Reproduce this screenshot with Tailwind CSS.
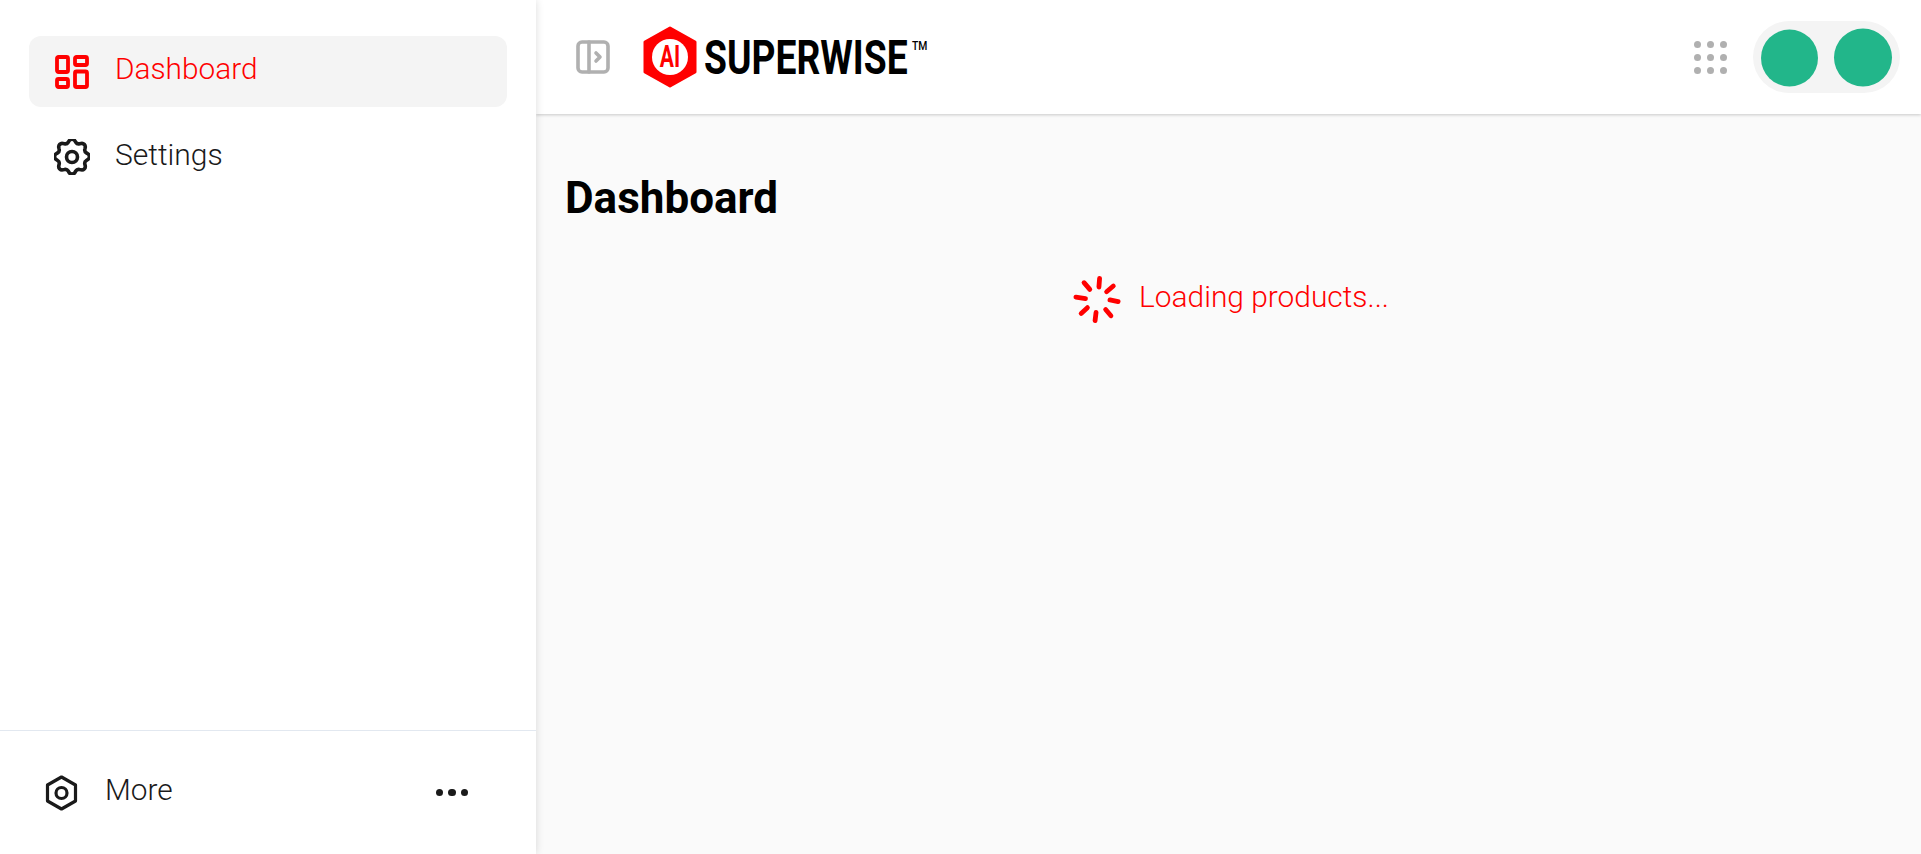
<!DOCTYPE html>
<html><head><meta charset="utf-8"><title>Dashboard</title>
<script src="https://cdn.jsdelivr.net/npm/@tailwindcss/browser@4"></script></head>
<body class="font-['Roboto',sans-serif]">
<div class="flex h-[854px] w-[1921px] overflow-hidden bg-[#fafafa]">
  <aside class="z-20 flex h-full w-[536px] shrink-0 flex-col bg-white shadow-[0_0_8px_rgba(0,0,0,0.14)]">
    <nav class="flex flex-1 flex-col gap-[14px] px-[29px] pt-[36px]">
      <a class="flex h-[71px] items-center gap-[25px] rounded-[12px] bg-[#f4f4f4] pl-[25px] text-[29.8px] font-light text-[#ff0000]">
        <svg class="h-[36px] w-[36px]" viewBox="0 0 36 36" fill="none" stroke="#ff0000" stroke-width="3.8" stroke-linejoin="round"><rect x="3" y="3" width="11" height="15" rx="1.5"/><rect x="21" y="3" width="12" height="8" rx="1.5"/><rect x="21" y="17.500" width="12" height="15.500" rx="1.5"/><rect x="3" y="25" width="11" height="8" rx="1.5"/></svg>
        <span class="pb-[5px]">Dashboard</span>
      </a>
      <a class="flex h-[71px] items-center gap-[25px] pl-[25px] text-[30px] font-light text-[#1a1a1a]">
        <svg class="h-[36px] w-[36px]" viewBox="1.5 1.5 21 21" fill="none" stroke="#1a1a1a" stroke-width="2.1" stroke-linejoin="round"><circle cx="12" cy="12" r="3.2"/><path d="M10.3 2.6a2 2 0 0 1 3.4 0l.5.8a2 2 0 0 0 2.2.9l.9-.2a2 2 0 0 1 2.4 2.4l-.2.9a2 2 0 0 0 .9 2.2l.8.5a2 2 0 0 1 0 3.4l-.8.5a2 2 0 0 0-.9 2.2l.2.9a2 2 0 0 1-2.4 2.4l-.9-.2a2 2 0 0 0-2.2.9l-.5.8a2 2 0 0 1-3.4 0l-.5-.8a2 2 0 0 0-2.2-.9l-.9.2a2 2 0 0 1-2.4-2.4l.2-.9a2 2 0 0 0-.9-2.2l-.8-.5a2 2 0 0 1 0-3.4l.8-.5a2 2 0 0 0 .9-2.2l-.2-.9a2 2 0 0 1 2.4-2.4l.9.2a2 2 0 0 0 2.2-.9z"/></svg>
        <span class="pb-[4px]">Settings</span>
      </a>
    </nav>
    <div class="flex h-[124px] items-center justify-between border-t border-[#e2e8f0] pr-[68px] pl-[45px]">
      <div class="flex items-center gap-[27px] text-[29.8px] font-light text-[#1a1a1a]">
        <svg class="h-[36px] w-[33px]" viewBox="0 0 33 36" fill="none" stroke="#1a1a1a" stroke-width="3.2" stroke-linejoin="round"><path d="M16.500 2 30.500 10v16L16.500 34 2.500 26V10z"/><circle cx="16.500" cy="18" r="5.500"/></svg>
        <span class="pb-[4px]">More</span>
      </div>
      <div class="flex gap-[5px]"><span class="h-[7.500px] w-[7.500px] rounded-full bg-[#1a1a1a]"></span><span class="h-[7.500px] w-[7.500px] rounded-full bg-[#1a1a1a]"></span><span class="h-[7.500px] w-[7.500px] rounded-full bg-[#1a1a1a]"></span></div>
    </div>
  </aside>
  <div class="flex min-w-0 flex-1 flex-col">
    <header class="z-10 flex h-[114px] shrink-0 items-center bg-white pr-[21px] pl-[40px] shadow-[0_1px_3px_rgba(0,0,0,0.2)]">
      <svg class="h-[34px] w-[34px] shrink-0" viewBox="0 0 34 34" fill="none" stroke="#b0b0b0" stroke-width="3.600" stroke-linecap="round" stroke-linejoin="round"><rect x="2" y="2" width="30" height="30" rx="4"/><path d="M13 2v30"/><path d="m20 13 4 4-4 4"/></svg>
      <div class="ml-[33px] flex items-center">
        <div class="relative h-[62px] w-[54px] shrink-0">
          <svg class="absolute inset-0 h-full w-full" viewBox="0 0 54 62"><path d="M27 2 52 16v30L27 60 2 46V16z" fill="#ff0000" stroke="#ff0000" stroke-width="3" stroke-linejoin="round"/><circle cx="27" cy="31" r="18" fill="#fff"/></svg>
          <span class="absolute inset-0 flex scale-x-[.68] items-center justify-center text-[31px] font-bold text-[#ff0000]">AI</span>
        </div>
        <span class="ml-[7px] w-[200px] origin-left scale-x-[.76] text-[49px] leading-none font-bold whitespace-nowrap text-black">SUPERWISE</span>
        <span class="ml-[6px] -mt-[22px] scale-x-[.8] text-[13px] font-medium text-black">TM</span>
      </div>
      <div class="ml-auto flex items-center gap-[26px]">
        <div class="grid grid-cols-3 gap-[6px]">
          <span class="h-[7px] w-[7px] rounded-full bg-[#b0b0b0]"></span><span class="h-[7px] w-[7px] rounded-full bg-[#b0b0b0]"></span><span class="h-[7px] w-[7px] rounded-full bg-[#b0b0b0]"></span>
          <span class="h-[7px] w-[7px] rounded-full bg-[#b0b0b0]"></span><span class="h-[7px] w-[7px] rounded-full bg-[#b0b0b0]"></span><span class="h-[7px] w-[7px] rounded-full bg-[#b0b0b0]"></span>
          <span class="h-[7px] w-[7px] rounded-full bg-[#b0b0b0]"></span><span class="h-[7px] w-[7px] rounded-full bg-[#b0b0b0]"></span><span class="h-[7px] w-[7px] rounded-full bg-[#b0b0b0]"></span>
        </div>
        <div class="flex h-[72px] w-[147px] items-center justify-between rounded-full bg-[#f4f4f4] px-[8px]">
          <span class="h-[57px] w-[57px] translate-y-[0.5px] rounded-full bg-[#22b68a]"></span>
          <span class="h-[58px] w-[58px] translate-y-[0.5px] rounded-full bg-[#22b68a]"></span>
        </div>
      </div>
    </header>
    <main class="flex-1 px-[29px] pt-[56px]">
      <h1 class="text-[44px] leading-[56px] font-bold text-black">Dashboard</h1>
      <div class="mt-[49px] flex items-center justify-center gap-[18px] pl-[5px] text-[29.9px] font-light text-[#ff0000]">
        <svg class="h-[48px] w-[48px]" viewBox="11 9 50 50" fill="none" stroke="#ff0000" stroke-width="5" stroke-linecap="round"><path d="M38.700 12.500 38 21.500"/><path d="M53 20.500 46 26.500"/><path d="M49.500 35 58 36.700"/><path d="M45 45 50.500 51.500"/><path d="M35 48 34 56.500"/><path d="M26 43 19.500 49"/><path d="M14 32 24 33.500"/><path d="M22.500 17 28.500 24"/></svg>
        <span class="pb-[3px]">Loading products...</span>
      </div>
    </main>
  </div>
</div>
</body></html>
